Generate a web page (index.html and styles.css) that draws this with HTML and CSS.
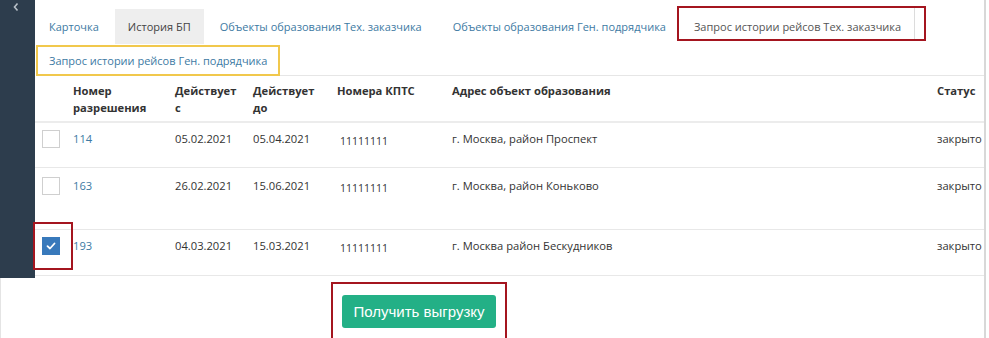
FILE: index.html
```html
<!DOCTYPE html>
<html lang="ru">
<head>
  <meta charset="UTF-8">
  <meta name="viewport" content="width=device-width, initial-scale=1.0">
  <title>Запрос истории рейсов</title>
  <link rel="stylesheet" href="styles.css">
</head>
<body>
  <div class="app">
    <div class="top">
      <div class="sidebar">
        <svg class="chevron" width="8" height="10" viewBox="0 0 8 10"><path d="M5.5 1.5 L2.5 5 L5.5 8.5" fill="none" stroke="#b8c0c8" stroke-width="1.6"/></svg>
      </div>
      <div class="content">
        <div class="tabs">
          <a class="tab">Карточка</a>
          <a class="tab active">История БП</a>
          <a class="tab">Объекты образования Тех. заказчика</a>
          <a class="tab tab-wide">Объекты образования Ген. подрядчика</a>
          <div class="mark-red"><span class="tab-current">Запрос истории рейсов Тех. заказчика</span></div>
        </div>
        <div class="tabs-second">
          <a class="tab-yellow">Запрос истории рейсов Ген. подрядчика</a>
          <div class="tabs-line"></div>
        </div>

        <div class="grid head">
          <div></div>
          <div>Номер<br>разрешения</div>
          <div>Действует<br>с</div>
          <div>Действует<br>до</div>
          <div>Номера КПТС</div>
          <div>Адрес объект образования</div>
          <div>Статус</div>
        </div>

        <div class="grid row row-1">
          <div><span class="check"></span></div>
          <div><a class="num">114</a></div>
          <div>05.02.2021</div>
          <div>05.04.2021</div>
          <div class="kpts">11111111</div>
          <div>г. Москва, район Проспект</div>
          <div>закрыто</div>
        </div>

        <div class="grid row row-2">
          <div><span class="check"></span></div>
          <div><a class="num">163</a></div>
          <div>26.02.2021</div>
          <div>15.06.2021</div>
          <div class="kpts">11111111</div>
          <div>г. Москва, район Коньково</div>
          <div>закрыто</div>
        </div>

        <div class="grid row row-3">
          <div class="check-cell">
            <span class="check checked">
              <svg width="12" height="12" viewBox="0 0 12 12"><path d="M2.5 6.2 L5 8.5 L9.5 3.5" fill="none" stroke="#fff" stroke-width="1.8" stroke-linecap="round" stroke-linejoin="round"/></svg>
            </span>
            <span class="mark-check"></span>
          </div>
          <div><a class="num">193</a></div>
          <div>04.03.2021</div>
          <div>15.03.2021</div>
          <div class="kpts">11111111</div>
          <div>г. Москва район Бескудников</div>
          <div>закрыто</div>
        </div>
      </div>
    </div>

    <div class="footer">
      <div class="mark-btn">
        <button class="btn">Получить выгрузку</button>
      </div>
    </div>
  </div>
</body>
</html>
```

FILE: styles.css
```css
body { margin: 0; font-family: "Open Sans", Arial, sans-serif; color: #333; background: #fff; }
.app { width: 984px; height: 338px; border-right: 2px solid #d8d8d8; overflow: hidden; }
.top { display: flex; }
.sidebar { width: 35px; height: 278px; background: #2d3d4d; flex-shrink: 0; }
.chevron { display: block; margin: 2px 0 0 12px; }
.content { flex: 1; }

.tabs { display: flex; align-items: flex-start; padding: 9px 0 0 1px; font-size: 11px; height: 35px; }
.tab { display: block; padding: 0 13px; line-height: 35px; height: 35px; color: #3d7aa3; margin-right: 3px; }
.tab.active { background: #eeeeee; color: #444; }
.tab-wide { margin-left: 2px; }
.mark-red { margin-top: -3px; margin-left: -5px; border: 2px solid #a4151f; padding-right: 9px; height: 31px; }
.tab-current { display: block; box-sizing: border-box; height: 31px; padding: 6px 13px 0 15px; line-height: 25px; color: #555; border-right: 1px solid #dcdcdc; }

.tabs-second { display: flex; align-items: flex-end; margin-top: 1px; padding-left: 1px; }
.tab-yellow { display: block; border: 2px solid #f1c84c; padding: 0 11px; line-height: 27px; font-size: 11px; color: #3d7aa3; white-space: nowrap; }
.tabs-line { flex: 1; border-bottom: 1px solid #e6e6e6; }

.grid { display: grid; grid-template-columns: 38px 102px 78px 84px 115px 485px 1fr; font-size: 11.2px; line-height: 17px; }
.head { font-weight: bold; height: 47px; box-sizing: border-box; padding-top: 6px; border-bottom: 2px solid #ececec; }
.row { box-sizing: border-box; border-bottom: 1px solid #e8e8e8; }
.row-1 { height: 45px; padding-top: 7px; }
.row-2 { height: 62px; padding-top: 9px; }
.row-3 { height: 46px; padding-top: 7px; }
.row > div:first-child { padding-left: 7px; }
.num { color: #3d7aa3; }
.kpts { font-size: 10.5px; padding-left: 3px; padding-top: 3px; }

.check { display: block; width: 16px; height: 16px; border: 1px solid #cfcfcf; background: #fff; }
.check.checked { width: 18px; height: 18px; border: none; background: #3879bb; display: flex; align-items: center; justify-content: center; }
.check-cell { position: relative; }
.mark-check { position: absolute; left: -2px; top: -15px; width: 36px; height: 44px; border: 2px solid #a4151f; }

.footer { height: 60px; border-left: 1px solid #e4e4e4; padding: 4px 0 0 330px; }
.mark-btn { display: inline-block; border: 2px solid #a4151f; padding: 11px 9px 10px 9px; height: 60px; box-sizing: border-box; }
.btn { background: #23b086; color: #fff; border: none; border-radius: 3px; font-family: "Liberation Sans", Arial, sans-serif; font-size: 15px; width: 154px; height: 33px; padding: 0; }
```
